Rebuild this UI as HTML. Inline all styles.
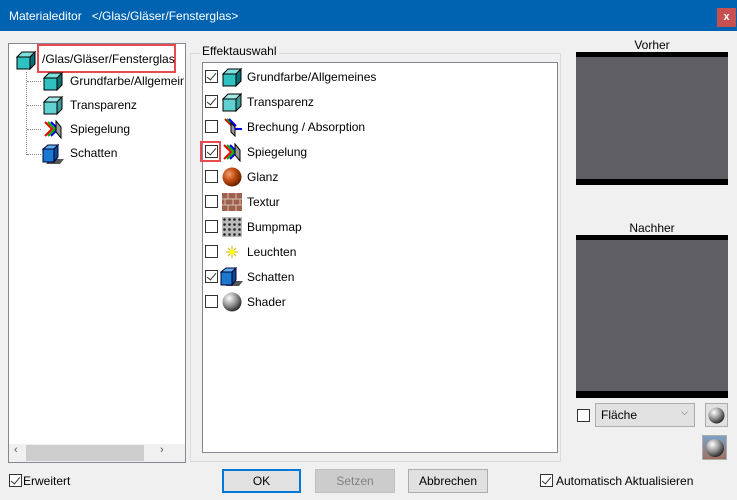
<!DOCTYPE html>
<html><head><meta charset="utf-8"><style>
*{margin:0;padding:0;box-sizing:border-box}
body{width:737px;height:500px;background:#f0f0f0;font-family:"Liberation Sans",sans-serif;font-size:12px;color:#000;position:relative;overflow:hidden}
.a{position:absolute}
.cb{position:absolute;width:13px;height:13px;border:1px solid #333;background:#fff}
.cb.c::after{content:"";position:absolute;left:3px;top:0px;width:4px;height:8px;border:solid #333;border-width:0 1.5px 1.5px 0;transform:rotate(40deg)}
.row{position:absolute;left:205px;height:20px}
.row .cb{left:0;top:3px}
.row .ic{position:absolute;left:17px;top:0;width:20px;height:20px}
.row span{position:absolute;left:42px;top:3px;white-space:nowrap}
.btn{position:absolute;top:469px;height:24px;border:1px solid #adadad;background:#e1e1e1;text-align:center;line-height:22px}
</style></head><body>
<div class="a" style="left:0;top:0;width:737px;height:31px;background:#0063b1"></div>
<div class="a" style="left:9px;top:9px;color:#fff">Materialeditor&nbsp;&nbsp; &lt;/Glas/Gläser/Fensterglas&gt;</div>
<div class="a" style="left:717px;top:8px;width:19px;height:19px;background:#c75050;color:#fff;font-weight:bold;text-align:center;line-height:18px;font-size:11px">x</div>

<!-- tree -->
<div class="a" style="left:8px;top:43px;width:178px;height:420px;border:1px solid #828790;background:#fff"></div>
<div class="a" style="left:9px;top:444px;width:176px;height:18px;background:#f0f0f0"></div>
<div class="a" style="left:26px;top:445px;width:118px;height:16px;background:#cdcdcd"></div>
<div class="a" style="left:14px;top:444px;font-size:11px;color:#555">‹</div>
<div class="a" style="left:160px;top:444px;font-size:11px;color:#555">›</div>
<div class="a" style="left:26px;top:72px;width:1px;height:83px;border-left:1px dotted #888"></div>
<div class="a" style="left:27px;top:81px;width:14px;border-top:1px dotted #888"></div>
<div class="a" style="left:27px;top:105px;width:14px;border-top:1px dotted #888"></div>
<div class="a" style="left:27px;top:129px;width:14px;border-top:1px dotted #888"></div>
<div class="a" style="left:27px;top:154px;width:14px;border-top:1px dotted #888"></div>
<svg class="a" style="left:15px;top:49px" width="22" height="22"><path d="M2 8 L7 3 L20 3 L15 8Z" fill="#7fe0e0" stroke="#000"/><path d="M2 8 H15 V20 H2Z" fill="#30c0c0" stroke="#000"/><path d="M15 8 L20 3 V15 L15 20Z" fill="#087070" stroke="#000"/></svg>
<div class="a" style="left:37px;top:44px;width:139px;height:29px;border:2px solid #e84a4f"></div>
<div class="a" style="left:42px;top:52px">/Glas/Gläser/Fensterglas</div>
<svg class="a" style="left:42px;top:71px" width="22" height="20"><path d="M2 7 L7 2 L20 2 L15 7Z" fill="#7fe0e0" stroke="#000"/><path d="M2 7 H15 V19 H2Z" fill="#30c0c0" stroke="#000"/><path d="M15 7 L20 2 V14 L15 19Z" fill="#087070" stroke="#000"/></svg>
<div class="a" style="left:70px;top:74px;white-space:nowrap;width:114px;overflow:hidden">Grundfarbe/Allgemeines</div>
<svg class="a" style="left:42px;top:95px" width="22" height="20"><path d="M2 7 L7 2 L20 2 L15 7Z" fill="#a0e8e8" stroke="#000"/><path d="M2 7 H15 V19 H2Z" fill="#60d0d0" stroke="#000"/><path d="M15 7 L20 2 V14 L15 19Z" fill="#3a9a9a" stroke="#000"/></svg>
<div class="a" style="left:70px;top:98px">Transparenz</div>
<svg class="a" style="left:42px;top:119px" width="22" height="20"><path d="M3 3 L10 10 L3 17" fill="none" stroke="#e00" stroke-width="2"/><path d="M6 3 L13 10 L6 17" fill="none" stroke="#0a0" stroke-width="2"/><path d="M9 3 L16 10 L9 17" fill="none" stroke="#00e" stroke-width="2"/><path d="M14 2 L19 8 V19 L14 13Z" fill="#999" stroke="#000"/></svg>
<div class="a" style="left:70px;top:122px">Spiegelung</div>
<svg class="a" style="left:40px;top:143px" width="26" height="22"><path d="M10 16 L24 16 L20 21 L6 21Z" fill="#555"/><path d="M3 6 L8 2 L18 2 L14 6Z" fill="#5ab0f0" stroke="#003"/><path d="M3 6 H14 V19 H3Z" fill="#1a78d0" stroke="#003"/><path d="M14 6 L18 2 V14 L14 19Z" fill="#0a4a90" stroke="#003"/></svg>
<div class="a" style="left:70px;top:146px">Schatten</div>

<!-- group -->
<div class="a" style="left:190px;top:53px;width:371px;height:409px;border:1px solid #dcdcdc"></div>
<div class="a" style="left:200px;top:44px;background:#f0f0f0;padding:0 2px">Effektauswahl</div>
<div class="a" style="left:202px;top:62px;width:356px;height:391px;border:1px solid #828790;background:#fff"></div>

<div class="row" style="top:67px"><div class="cb c"></div><svg class="ic" viewBox="0 0 20 20"><path d="M1 7 L6 2 L19 2 L14 7Z" fill="#7fe0e0" stroke="#000"/><path d="M1 7 H14 V19 H1Z" fill="#30c0c0" stroke="#000"/><path d="M14 7 L19 2 V14 L14 19Z" fill="#087070" stroke="#000"/></svg><span>Grundfarbe/Allgemeines</span></div>
<div class="row" style="top:92px"><div class="cb c"></div><svg class="ic" viewBox="0 0 20 20"><path d="M1 7 L6 2 L19 2 L14 7Z" fill="#a0e8e8" stroke="#000"/><path d="M1 7 H14 V19 H1Z" fill="#60d0d0" stroke="#000"/><path d="M14 7 L19 2 V14 L14 19Z" fill="#3a9a9a" stroke="#000"/></svg><span>Transparenz</span></div>
<div class="row" style="top:117px"><div class="cb"></div><svg class="ic" viewBox="0 0 20 20"><path d="M3 2 L10 9" stroke="#e00" stroke-width="2"/><path d="M5 2 L12 9" stroke="#0a0" stroke-width="2"/><path d="M7 2 L14 9" stroke="#00e" stroke-width="2"/><path d="M9 6 L13 10 V19 L9 15Z" fill="#999" stroke="#000"/><path d="M13 12 H20" stroke="#00e" stroke-width="2"/></svg><span>Brechung / Absorption</span></div>
<div class="row" style="top:142px"><div class="cb c"></div><svg class="ic" viewBox="0 0 20 20"><path d="M2 3 L9 10 L2 17" fill="none" stroke="#e00" stroke-width="2"/><path d="M5 3 L12 10 L5 17" fill="none" stroke="#0a0" stroke-width="2"/><path d="M8 3 L15 10 L8 17" fill="none" stroke="#00e" stroke-width="2"/><path d="M13 2 L18 8 V19 L13 13Z" fill="#999" stroke="#000"/></svg><span>Spiegelung</span></div>
<div class="a" style="left:200px;top:141px;width:21px;height:21px;border:2px solid #e84a4f"></div>
<div class="row" style="top:167px"><div class="cb"></div><svg class="ic" viewBox="0 0 20 20"><defs><radialGradient id="g1" cx=".35" cy=".35" r=".7"><stop offset="0" stop-color="#f0a070"/><stop offset=".5" stop-color="#c04a10"/><stop offset="1" stop-color="#602000"/></radialGradient></defs><circle cx="10" cy="10" r="9.5" fill="url(#g1)"/></svg><span>Glanz</span></div>
<div class="row" style="top:192px"><div class="cb"></div><svg class="ic" viewBox="0 0 20 20"><rect x="0" y="1" width="20" height="18" fill="#a06050"/><path d="M0 7H20M0 13H20M6 1V7M14 1V7M3 7V13M11 7V13M18 7V13M6 13V19M14 13V19" stroke="#d8c0b0" stroke-width="1"/></svg><span>Textur</span></div>
<div class="row" style="top:217px"><div class="cb"></div><svg class="ic" viewBox="0 0 20 20"><rect width="20" height="20" fill="#bbb"/><g fill="#222"><circle cx="2.5" cy="2.5" r="1.3"/><circle cx="7.5" cy="2.5" r="1.3"/><circle cx="12.5" cy="2.5" r="1.3"/><circle cx="17.5" cy="2.5" r="1.3"/><circle cx="2.5" cy="7.5" r="1.3"/><circle cx="7.5" cy="7.5" r="1.3"/><circle cx="12.5" cy="7.5" r="1.3"/><circle cx="17.5" cy="7.5" r="1.3"/><circle cx="2.5" cy="12.5" r="1.3"/><circle cx="7.5" cy="12.5" r="1.3"/><circle cx="12.5" cy="12.5" r="1.3"/><circle cx="17.5" cy="12.5" r="1.3"/><circle cx="2.5" cy="17.5" r="1.3"/><circle cx="7.5" cy="17.5" r="1.3"/><circle cx="12.5" cy="17.5" r="1.3"/><circle cx="17.5" cy="17.5" r="1.3"/></g></svg><span>Bumpmap</span></div>
<div class="row" style="top:242px"><div class="cb"></div><svg class="ic" viewBox="0 0 20 20"><g stroke="#c8b000" stroke-width="1"><path d="M10 4V16M4 10H16M6 6L14 14M14 6L6 14"/></g><circle cx="10" cy="10" r="2.5" fill="#ff0"/></svg><span>Leuchten</span></div>
<div class="row" style="top:267px"><div class="cb c"></div><svg class="ic" style="left:15px;width:24px" viewBox="0 0 24 20"><path d="M10 14 L23 14 L19 19 L6 19Z" fill="#555"/><path d="M1 5 L6 1 L16 1 L12 5Z" fill="#5ab0f0" stroke="#003"/><path d="M1 5 H12 V18 H1Z" fill="#1a78d0" stroke="#003"/><path d="M12 5 L16 1 V13 L12 18Z" fill="#0a4a90" stroke="#003"/></svg><span>Schatten</span></div>
<div class="row" style="top:292px"><div class="cb"></div><svg class="ic" viewBox="0 0 20 20"><defs><radialGradient id="g2" cx=".35" cy=".3" r=".75"><stop offset="0" stop-color="#fff"/><stop offset=".5" stop-color="#999"/><stop offset="1" stop-color="#222"/></radialGradient></defs><circle cx="10" cy="10" r="9.5" fill="url(#g2)"/></svg><span>Shader</span></div>

<!-- previews -->
<div class="a" style="left:576px;top:38px;width:152px;text-align:center">Vorher</div>
<div class="a" style="left:576px;top:52px;width:152px;height:133px;background:#000"></div>
<div class="a" style="left:576px;top:57px;width:152px;height:122px;background:#5f5e63"></div>
<div class="a" style="left:576px;top:221px;width:152px;text-align:center">Nachher</div>
<div class="a" style="left:576px;top:235px;width:152px;height:163px;background:#000"></div>
<div class="a" style="left:576px;top:240px;width:152px;height:151px;background:#5f5e63"></div>

<div class="cb" style="left:577px;top:409px"></div>
<div class="a" style="left:595px;top:403px;width:100px;height:24px;border:1px solid #adadad;background:#e1e1e1;padding:4px 0 0 5px">Fläche<span style="position:absolute;right:6px;top:3px;font-size:9px;color:#555">⌵</span></div>
<div class="a" style="left:705px;top:403px;width:23px;height:24px;border:1px solid #adadad;background:#e1e1e1"><svg style="position:absolute;left:2px;top:3px" width="17" height="17"><circle cx="8.5" cy="8.5" r="8" fill="url(#g2)"/></svg></div>
<div class="a" style="left:702px;top:435px;width:25px;height:25px;border:1px solid #adadad;background:linear-gradient(#7aa0c8,#a07060)"><svg style="position:absolute;left:2px;top:2px" width="20" height="20"><circle cx="10" cy="10" r="9" fill="url(#g2)"/></svg></div>

<!-- bottom -->
<div class="cb c" style="left:9px;top:474px"></div>
<div class="a" style="left:23px;top:474px">Erweitert</div>
<div class="btn" style="left:222px;width:79px;border:2px solid #0078d7;line-height:20px">OK</div>
<div class="btn" style="left:315px;width:80px;background:#cccccc;border-color:#bfbfbf;color:#838383">Setzen</div>
<div class="btn" style="left:408px;width:80px">Abbrechen</div>
<div class="cb c" style="left:540px;top:474px"></div>
<div class="a" style="left:556px;top:474px">Automatisch Aktualisieren</div>
</body></html>
